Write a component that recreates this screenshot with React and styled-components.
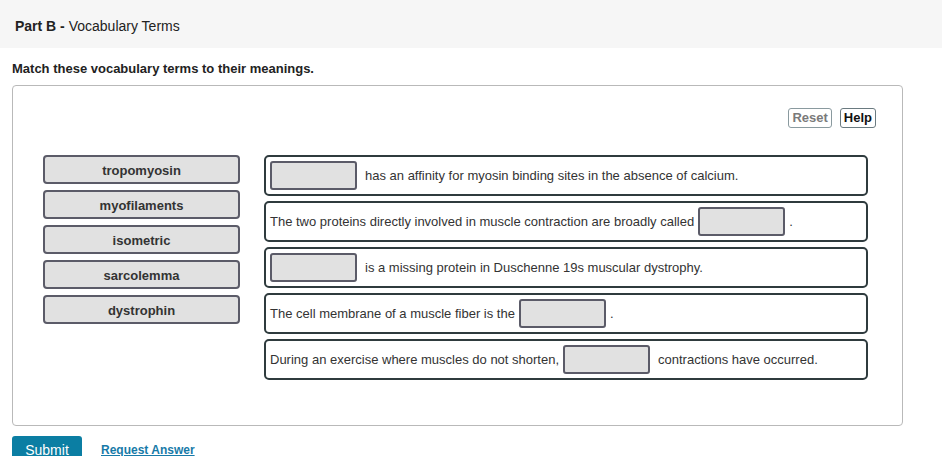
import React from "react";
import styled, { createGlobalStyle } from "styled-components";

const Global = createGlobalStyle`
  html, body { margin: 0; padding: 0; background: #fff; }
  body { font-family: "Liberation Sans", Arial, Helvetica, sans-serif; color: #333; }
`;

const Header = styled.div`
  height: 48px;
  box-sizing: border-box;
  background: #f6f6f6;
  display: flex;
  align-items: center;
  padding: 4px 0 0 15px;
  font-size: 14px;
  color: #222;
  b { font-weight: bold; }
`;

const Instructions = styled.div`
  margin: 13px 0 0 12px;
  font-size: 13px;
  font-weight: bold;
  color: #222;
  height: 15px;
  line-height: 15px;
`;

const Panel = styled.div`
  margin: 9px 0 0 12px;
  width: 889px;
  height: 339px;
  border: 1px solid #b9b9b9;
  border-radius: 4px;
  box-sizing: content-box;
  display: flex;
  flex-direction: column;
`;

const Toolbar = styled.div`
  display: flex;
  justify-content: flex-end;
  gap: 8px;
  padding: 22px 26px 0 0;
  height: 20px;
`;

const ToolButton = styled.button`
  height: 20px;
  padding: 0 3px;
  border: 1px solid ${p => (p.$disabled ? "#8a9a9f" : "#6a7a80")};
  border-radius: 3px;
  background: #fff;
  font-family: inherit;
  font-size: 13px;
  font-weight: bold;
  color: ${p => (p.$disabled ? "#7a7a7a" : "#111")};
  line-height: 18px;
`;

const Content = styled.div`
  display: flex;
  gap: 24px;
  padding: 27px 0 0 30px;
`;

const TermList = styled.div`
  display: flex;
  flex-direction: column;
  gap: 6px;
  width: 197px;
`;

const Chip = styled.div`
  height: 29px;
  box-sizing: border-box;
  border: 2px solid #5b5b68;
  border-radius: 4px;
  background: #e1e1e1;
  display: flex;
  justify-content: center;
  align-items: center;
  padding-top: 1px;
  font-size: 13px;
  font-weight: bold;
  color: #333;
`;

const Sentences = styled.div`
  display: flex;
  flex-direction: column;
  gap: 5px;
  width: 604px;
`;

const Sentence = styled.div`
  height: 41px;
  box-sizing: border-box;
  border: 2px solid #2f3b3e;
  border-radius: 5px;
  display: flex;
  align-items: center;
  padding: 0 4px;
  font-size: 13px;
  color: #333;
  white-space: pre;
`;

const Drop = styled.span`
  display: inline-block;
  width: 87px;
  height: 29px;
  box-sizing: border-box;
  border: 2px solid #5b5b68;
  border-radius: 3px;
  background: #e1e1e1;
  margin: 0 ${p => p.$right}px 0 ${p => p.$left}px;
  flex: none;
`;

const Footer = styled.div`
  display: flex;
  align-items: flex-start;
  gap: 19px;
  margin: 10px 0 0 12px;
`;

const SubmitButton = styled.button`
  width: 70px;
  height: 30px;
  border: none;
  border-radius: 3px 3px 0 0;
  background: #0b7ea3;
  color: #fff;
  font-family: inherit;
  font-size: 14px;
  padding: 6px 0 0;
  line-height: 16px;
  display: flex;
  justify-content: center;
  align-items: flex-start;
`;

const LinkText = styled.a`
  margin-top: 7px;
  font-size: 12px;
  font-weight: bold;
  color: #177aa8;
  text-decoration: underline;
`;

const terms = ["tropomyosin", "myofilaments", "isometric", "sarcolemma", "dystrophin"];

export default function App() {
  return (
    <>
      <Global />
      <Header>
        <span><b>Part B -</b> Vocabulary Terms</span>
      </Header>
      <Instructions>Match these vocabulary terms to their meanings.</Instructions>
      <Panel>
        <Toolbar>
          <ToolButton $disabled>Reset</ToolButton>
          <ToolButton>Help</ToolButton>
        </Toolbar>
        <Content>
          <TermList>
            {terms.map(t => (
              <Chip key={t}>{t}</Chip>
            ))}
          </TermList>
          <Sentences>
            <Sentence>
              <Drop $left={0} $right={8} />has an affinity for myosin binding sites in the absence of calcium.
            </Sentence>
            <Sentence>
              The two proteins directly involved in muscle contraction are broadly called<Drop $left={4} $right={4} />.
            </Sentence>
            <Sentence>
              <Drop $left={0} $right={8} />is a missing protein in Duschenne 19s muscular dystrophy.
            </Sentence>
            <Sentence>
              The cell membrane of a muscle fiber is the<Drop $left={4} $right={4} />.
            </Sentence>
            <Sentence>
              During an exercise where muscles do not shorten,<Drop $left={4} $right={8} />contractions have occurred.
            </Sentence>
          </Sentences>
        </Content>
      </Panel>
      <Footer>
        <SubmitButton>Submit</SubmitButton>
        <LinkText href="#">Request Answer</LinkText>
      </Footer>
    </>
  );
}
